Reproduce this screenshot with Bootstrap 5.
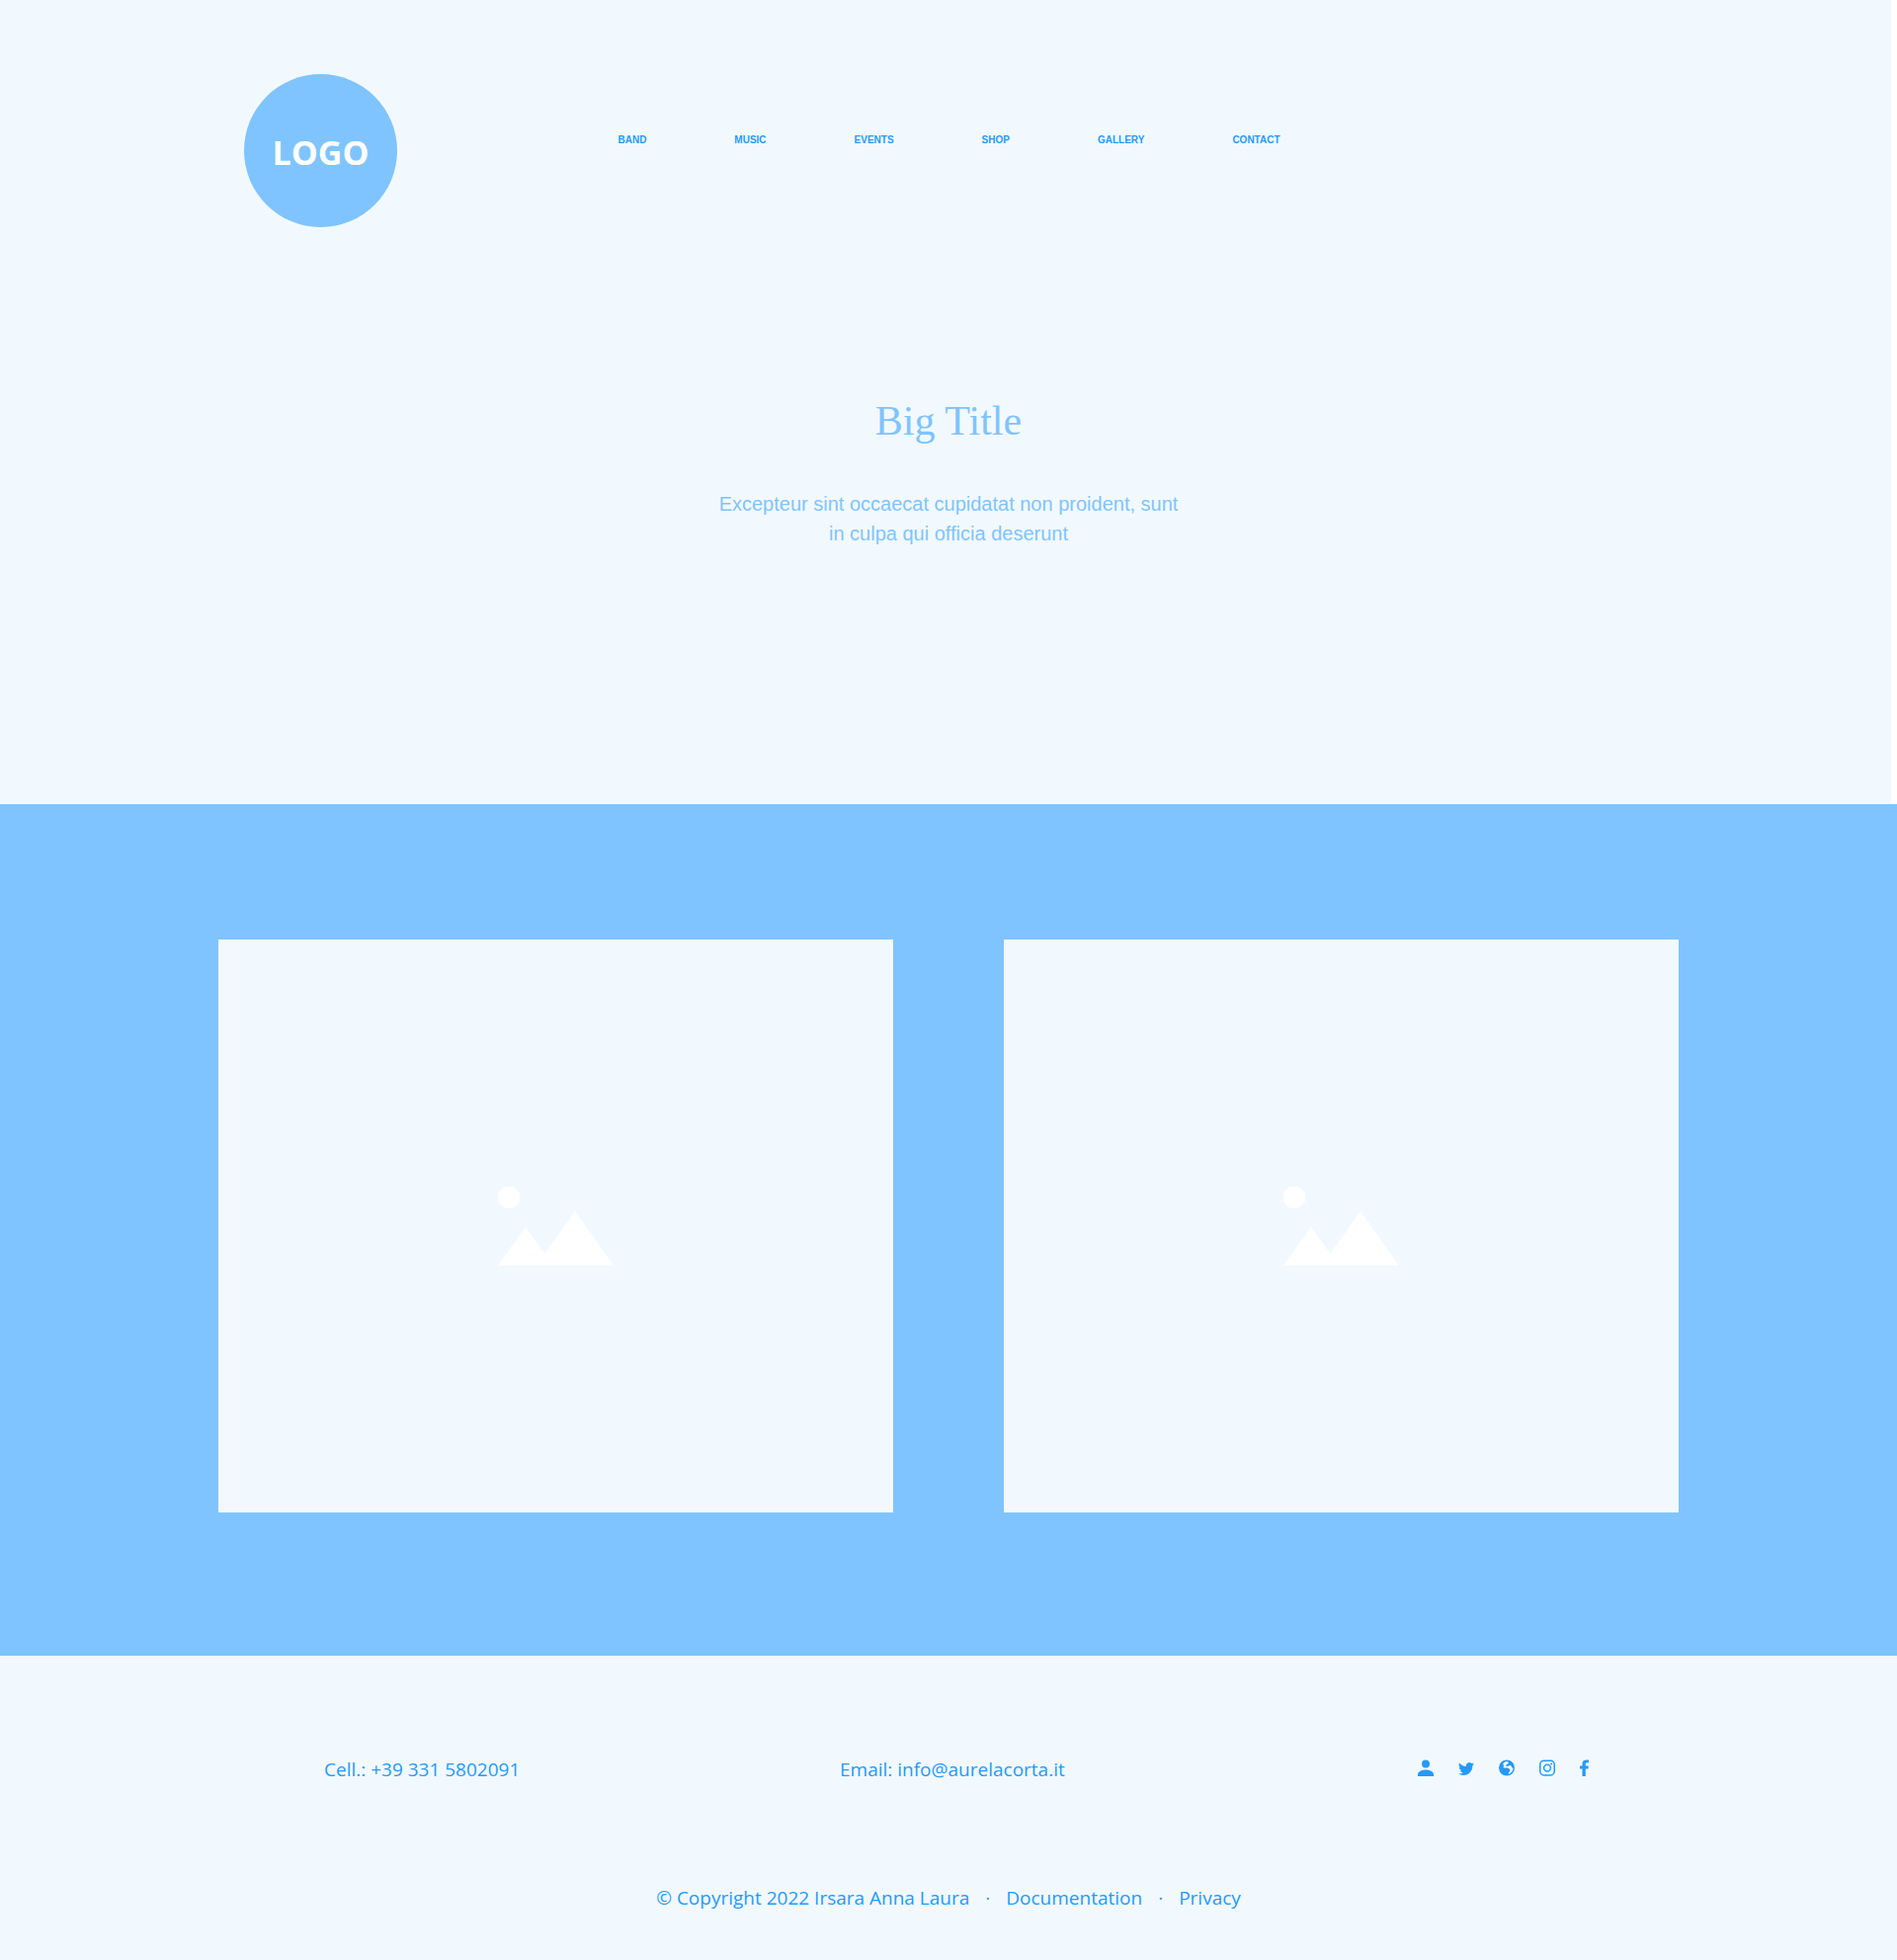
<!DOCTYPE html>
<html lang="en">
<head>
<meta charset="utf-8">
<meta name="viewport" content="width=device-width, initial-scale=1">
<title>Big Title</title>
<link href="https://cdn.jsdelivr.net/npm/bootstrap@5.3.0/dist/css/bootstrap.min.css" rel="stylesheet">
<style>
:root { --ink: #2699fb; --sky: #7fc4ff; --pale: #f1f9ff; }
body { font-family: "Open Sans", "Noto Sans", sans-serif; background: #fff; }
a { color: inherit; text-decoration: none; }
a:hover { text-decoration: underline; }
.hero { background: var(--pale); margin-right: 6px; padding-bottom: 259px; }
.topbar { display: grid; grid-template-columns: 1fr auto 1fr; padding: 75px 0 0 7px; }
.brand-disc { width: 155px; height: 155px; margin-left: 240px; padding-top: 4px; background: var(--sky); font-size: 34px; font-weight: 700; color: #fff; }
.site-menu { gap: 89px; padding-top: 59px; font: 700 10px/15px "Liberation Sans", Arial, sans-serif; color: var(--ink); }
.headline { padding: 168px 0 0 6px; color: var(--sky); }
.headline h1 { font: 400 42px/56px "Liberation Serif", Georgia, serif; margin-bottom: 41px; }
.headline p { font: 400 20px/30px "Liberation Sans", Arial, sans-serif; max-width: 480px; }
.gallery { background: var(--sky); padding: 137px 221px 145px; }
.gallery-row { gap: 112px; }
.tile { background: var(--pale); height: 580px; }
.site-footer { background: var(--pale); color: var(--ink); font-size: 19px; line-height: 30px; padding: 100px 0 48px; }
.contacts { display: grid; grid-template-columns: 522fr 585fr 174fr; padding: 0 311px 0 328px; margin-bottom: 100px; }
.social { gap: 25px; padding-top: 5px; }
.social svg { display: block; fill: currentColor; }
.legal { gap: 16px; }
</style>
</head>
<body>
<header class="hero">
  <div class="topbar">
    <a href="#" class="brand-disc rounded-circle d-flex align-items-center justify-content-center">LOGO</a>
    <nav class="site-menu d-flex" aria-label="Main">
      <a href="#">BAND</a><a href="#">MUSIC</a><a href="#">EVENTS</a><a href="#">SHOP</a><a href="#">GALLERY</a><a href="#">CONTACT</a>
    </nav>
  </div>
  <div class="headline text-center">
    <h1>Big Title</h1>
    <p class="mx-auto mb-0">Excepteur sint occaecat cupidatat non proident, sunt in culpa qui officia deserunt</p>
  </div>
</header>
<main class="gallery">
  <div class="gallery-row d-flex">
    <div class="tile flex-fill d-flex align-items-center justify-content-center">
      <svg width="118" height="82" viewBox="1 0 118 82" fill="#fff" role="img" aria-label="Image placeholder"><circle cx="12" cy="12" r="11.3"/><path d="M1 81 29 42 48.500 69 79 26 118 81Z"/></svg>
    </div>
    <div class="tile flex-fill d-flex align-items-center justify-content-center">
      <svg width="118" height="82" viewBox="1 0 118 82" fill="#fff" role="img" aria-label="Image placeholder"><circle cx="12" cy="12" r="11.3"/><path d="M1 81 29 42 48.500 69 79 26 118 81Z"/></svg>
    </div>
  </div>
</main>
<footer class="site-footer">
  <div class="contacts text-nowrap">
    <div>Cell.: <a href="tel:+393315802091">+39 331 5802091</a></div>
    <div>Email: <a href="mailto:info@aurelacorta.it">info@aurelacorta.it</a></div>
    <div class="social d-flex align-items-start">
      <a href="#" aria-label="Profile"><svg width="16" height="17" viewBox="0 0 16 17"><circle cx="8" cy="4.500" r="4"/><path d="M0 17v-2c0-2.700 4-4.500 8-4.500s8 1.800 8 4.500v2Z"/></svg></a>
      <a href="#" aria-label="Twitter"><svg width="16" height="17" viewBox="0 -0.500 16 16"><path d="M5.026 15c6.038 0 9.341-5.003 9.341-9.334q.002-.211-.006-.422A6.700 6.700 0 0 0 16 3.542a6.700 6.700 0 0 1-1.889.518 3.300 3.300 0 0 0 1.447-1.817 6.500 6.500 0 0 1-2.087.793A3.286 3.286 0 0 0 7.875 6.030a9.320 9.320 0 0 1-6.767-3.429 3.290 3.290 0 0 0 1.018 4.382A3.300 3.300 0 0 1 .640 6.575v.045a3.290 3.290 0 0 0 2.632 3.218 3.200 3.200 0 0 1-.865.115 3 3 0 0 1-.614-.057 3.280 3.280 0 0 0 3.067 2.277A6.600 6.600 0 0 1 .780 13.580a6 6 0 0 1-.780-.045A9.340 9.340 0 0 0 5.026 15"/></svg></a>
      <a href="#" aria-label="Website"><svg width="16" height="17" viewBox="0 0 16 16"><circle cx="8" cy="8" r="8"/><path fill="#f1f9ff" d="M8.500 1.400 5.600 2.300 4.200 4.200l1 1.800L4.300 7.400l2.200.9 1.500-.6 2.800 1.200.8 1.700-1.300 1.600L9.600 14.400c2.900-.7 4.800-3.200 4.900-6.200L13 7.600 12.600 6l-1.700-.6-1.800 1L7.300 6.100 7.500 4.500l1.700-.5.6-1.500Z"/></svg></a>
      <a href="#" aria-label="Instagram"><svg width="16" height="17" viewBox="0 0 16 17"><g fill="none" stroke="currentColor" stroke-width="1.500"><rect x=".75" y="1.200" width="14.500" height="14.800" rx="4"/><circle cx="8" cy="8.600" r="3.400"/></g><circle cx="12.200" cy="4.400" r="1"/></svg></a>
      <a href="#" aria-label="Facebook"><svg width="9" height="17" viewBox="0 0 9 17"><path d="M2.500 17V9.400H0V6.500h2.500V4.300C2.500 1.600 4 .4 6.300.4 7.400.4 8.400.5 9 .6v2.600H7.300C6 3.200 5.800 3.800 5.800 4.700v1.800h3L8.400 9.400H5.800V17Z"/></svg></a>
    </div>
  </div>
  <div class="legal d-flex justify-content-center">
    <span>© Copyright 2022 Irsara Anna Laura</span><span>·</span><a href="#">Documentation</a><span>·</span><a href="#">Privacy</a>
  </div>
</footer>
<script src="https://cdn.jsdelivr.net/npm/bootstrap@5.3.0/dist/js/bootstrap.bundle.min.js"></script>
</body>
</html>
